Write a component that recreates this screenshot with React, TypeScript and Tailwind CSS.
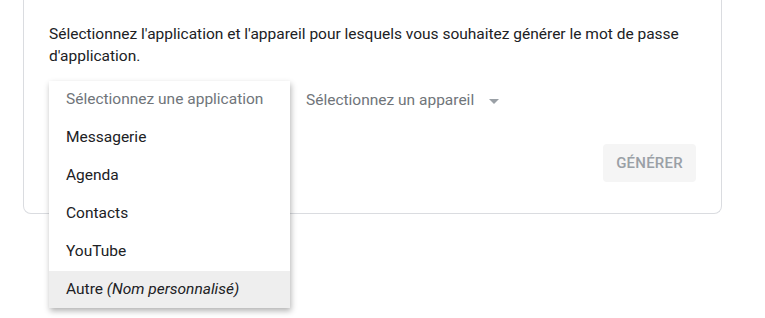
import React from "react";

export default function App() {
  const items = ["Messagerie", "Agenda", "Contacts", "YouTube"];
  return (
    <div className="w-[765px] h-[318px] bg-white overflow-hidden" style={{ fontFamily: "Roboto, 'Liberation Sans', sans-serif" }}>
      <div className="ml-[23px] w-[699px] border border-t-0 border-[#dadce0] rounded-b-lg px-[25px] pt-[24px] pb-[31px]">
        <p className="text-[15.5px] leading-[21.5px] text-[#202124] pr-[4px]">
          Sélectionnez l'application et l'appareil pour lesquels vous souhaitez générer le mot de passe d'application.
        </p>
        <div className="relative mt-[15px] flex items-center h-[38px]">
          <div className="w-[241px] h-[38px]" />
          <div className="ml-[16px] flex items-center gap-[15px] text-[15.5px] text-[#70757a]">
            <span>Sélectionnez un appareil</span>
            <span className="w-0 h-0 border-l-[5px] border-r-[5px] border-t-[5px] border-l-transparent border-r-transparent border-t-[#9aa0a6]" />
          </div>
          <div className="absolute left-0 top-[-1px] z-10 w-[241px] bg-white shadow-[1px_3px_6px_rgba(0,0,0,0.3)] text-[15.5px]">
            <div className="h-[38px] pl-[17px] flex items-center text-[#70757a]">Sélectionnez une application</div>
            {items.map((it) => (
              <div key={it} className="h-[38px] pl-[17px] flex items-center text-[#202124]">{it}</div>
            ))}
            <div className="h-[37px] pl-[17px] flex items-center text-[#202124] bg-[#eeeeee]">
              Autre&nbsp;<i>(Nom personnalisé)</i>
            </div>
          </div>
        </div>
        <div className="mt-[24px] flex justify-end">
          <button className="w-[93px] h-[38px] rounded-[4px] bg-[#f5f5f5] text-[15px] font-medium tracking-[0.2px] text-[#9aa0a6]">
            GÉNÉRER
          </button>
        </div>
      </div>
    </div>
  );
}
